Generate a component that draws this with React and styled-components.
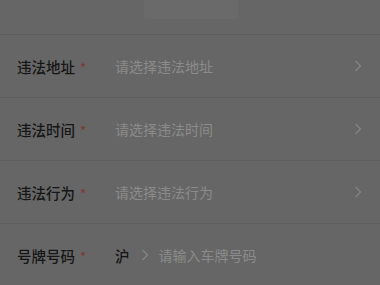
import React from "react";
import styled, { createGlobalStyle } from "styled-components";

const GlobalStyle = createGlobalStyle`
  html, body {
    margin: 0;
    padding: 0;
    background: #666666;
  }
  body {
    font-family: "Noto Sans CJK SC", "Noto Sans", sans-serif;
  }
`;

const rows = [
  { label: "违法地址", placeholder: "请选择违法地址" },
  { label: "违法时间", placeholder: "请选择违法时间" },
  { label: "违法行为", placeholder: "请选择违法行为" },
];

const Chevron = ({ size = 14 }) => (
  <svg width={size} height={size} viewBox="0 0 14 14" fill="none">
    <path d="M4.5 2 L9.5 7 L4.5 12" stroke="#858585" strokeWidth="1.2" />
  </svg>
);

const App = () => {
  return (
    <Page>
      <GlobalStyle />
      <TopBar>
        <TabGhost />
      </TopBar>
      {rows.map((r) => (
        <Row key={r.label}>
          <Label>
            {r.label}
            <Star>*</Star>
          </Label>
          <Placeholder>{r.placeholder}</Placeholder>
          <Arrow>
            <Chevron />
          </Arrow>
        </Row>
      ))}
      <Row>
        <Label>
          号牌号码
          <Star>*</Star>
        </Label>
        <Plate>
          <Province>沪</Province>
          <Chevron />
        </Plate>
        <Placeholder>请输入车牌号码</Placeholder>
      </Row>
    </Page>
  );
};

const Page = styled.div`
  width: 380px;
  height: 285px;
  overflow: hidden;
  background: #666666;
`;

const TopBar = styled.div`
  height: 34px;
  display: flex;
  justify-content: center;
  padding-left: 1px;
  box-sizing: border-box;
`;

const TabGhost = styled.div`
  width: 94px;
  height: 19px;
  background: #6a6a6a;
  border-radius: 0 0 3px 3px;
`;

const Row = styled.div`
  height: 63px;
  display: flex;
  align-items: center;
  border-top: 1px solid #5e5e5e;
  padding: 0 17px 0 17px;
  box-sizing: border-box;
`;

const Label = styled.div`
  width: 98px;
  flex-shrink: 0;
  font-size: 14.5px;
  font-weight: 500;
  color: #161616;
  display: flex;
  align-items: center;
`;

const Star = styled.span`
  color: #7c3b3b;
  font-size: 13px;
  margin-left: 5px;
  margin-top: 2px;
`;

const Placeholder = styled.div`
  flex: 1;
  font-size: 14px;
  color: #8b8b8b;
`;

const Arrow = styled.div`
  display: flex;
  align-items: center;
  margin-right: -2px;
`;

const Plate = styled.div`
  display: flex;
  align-items: center;
  gap: 8px;
  margin-right: 7px;
`;

const Province = styled.span`
  font-size: 14.5px;
  font-weight: 500;
  color: #161616;
`;

export default App;
